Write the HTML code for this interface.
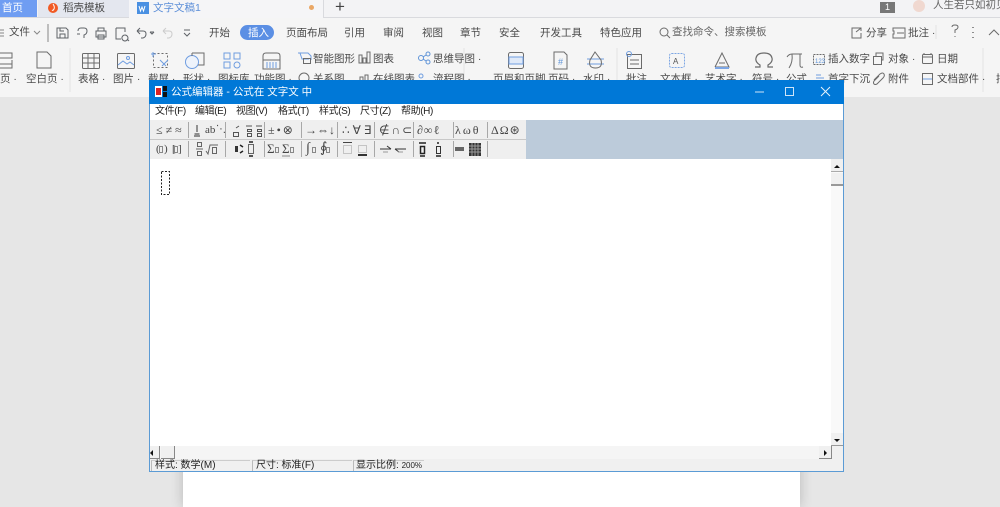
<!DOCTYPE html>
<html><head><meta charset="utf-8"><style>
html,body{margin:0;padding:0;background:#e6e6e6}
body{width:1000px;height:507px;overflow:hidden;position:relative;background:#e6e6e6;font-family:"Liberation Sans","Noto Sans CJK SC",sans-serif;color:#444;filter:blur(.3px)}
.a{position:absolute}
.t{position:absolute;white-space:nowrap;font-size:10.5px;line-height:14px;color:#4a4a4a;transform:translateY(-7px)}
.m{color:#222;font-size:10px;letter-spacing:-.4px}
.s{position:absolute;top:0;left:0;overflow:visible}
.g{position:absolute;white-space:nowrap;font-family:"Liberation Serif","DejaVu Sans",serif;font-size:12px;line-height:14px;color:#444;transform:translateY(-7px)}
.sep{position:absolute;width:1px;background:#a8a8a8}
</style></head><body>
<div class="a" style="left:0;top:0;width:1000px;height:17px;background:#f3f3f5"></div>
<div class="a" style="left:0;top:17px;width:1000px;height:1px;background:#d9dade"></div>
<div class="a" style="left:0;top:18px;width:1000px;height:79px;background:#f5f5f5"></div>
<div class="a" style="left:0;top:0;width:37px;height:17px;background:#6f9df2"></div>
<div class="a" style="left:38px;top:0;width:91px;height:17px;background:#e4e7ef"></div>
<div class="a" style="left:129px;top:0;width:194px;height:18px;background:#f5f5f7;border-right:1px solid #d9dade"></div>
<div class="t" style="left:2px;top:8px;color:#fff">首页</div>
<div class="t" style="left:63px;top:8px">稻壳模板</div>
<div class="t" style="left:153px;top:8px;color:#5d8fd8">文字文稿1</div>
<div class="t" style="left:335px;top:7px;font-size:17px;color:#444">+</div>
<div class="a" style="left:309px;top:5px;width:5px;height:5px;border-radius:50%;background:#eaa765"></div>
<div class="a" style="left:880px;top:2px;width:15px;height:11px;background:#777;color:#fff;font-size:9px;line-height:11px;text-align:center">1</div>
<div class="a" style="left:913px;top:0;width:12px;height:12px;border-radius:50%;background:#f0d8d0"></div>
<div class="t" style="left:933px;top:5px;color:#666">人生若只如初见</div>

<svg class="s" width="1000" height="507" fill="none" stroke="#5f6368" stroke-width="1">
<circle cx="53" cy="8" r="5" fill="#f15a24" stroke="none"/>
<path d="M53 4q2 3 1 5-1 2-2 1" stroke="#fff"/>
<rect x="137" y="2" width="12" height="12" fill="#4a90e2" stroke="none"/>
<path d="M139 6l1.500 5 1.500-4 1.500 4 1.500-5" stroke="#fff"/>
<path d="M0 30h4M0 33h4M0 36h4M34 31l3 3 3-3M48 24v18" stroke="#888"/>
<path d="M57 28h9l2 2v8h-11zM60 38v-4h5v4M60 28v3h4"/>
<path d="M78 31q0-3 3-3h3q3 0 3 3 0 3-3 4v3M77 34h3"/>
<path d="M96 31h10v6h-10zM98 31v-3h6v3M98 35h6v4h-6z"/>
<path d="M116 28h9v4M116 28v11h5M125 35a3 3 0 1 1-.1 0M127 39l2 2" />
<path d="M137 31l3-3M137 31l3 3M137 31h6q3 0 3 3t-3 4h-2"/>
<path d="M150 32h4M150 32l2 2 2-2" />
<path d="M163 31l3-3M163 31l3 3M163 31h6q3 0 3 3t-3 4h-2" stroke="#ccc"/>
<path d="M184 30h6M184 33l3 3 3-3"/>
<rect x="240" y="25" width="34" height="15" rx="7.500" fill="#5b8fe4" stroke="none"/>
<g stroke="#6b6b6b">
<path d="M-8 53h20v5h-20M12 60v8h-20M-8 64h20"/>
<path d="M37 52h10l4 4v12h-14z"/>
<rect x="82.500" y="53.500" width="17" height="15" rx="1"/><path d="M83 58h16M83 63h16M88 54v14M94 54v14"/>
<rect x="117.500" y="53.500" width="17" height="15" rx="1"/><path d="M118 65l5-4 4 3 3-2 4 3" stroke="#6f9de0"/><circle cx="128" cy="58" r="1.500" stroke="#6f9de0"/>
<rect x="153.500" y="53.500" width="14" height="14" stroke-dasharray="2 2"/><path d="M151 54h5M153 52v5M160 60l6 6M168 60l-6 6" stroke="#6f9de0"/>
<circle cx="192" cy="62" r="6.500" stroke="#6f9de0" fill="#eef3fb"/><path d="M192 53h12v12h-6M192 53v3"/>
<g stroke="#6f9de0"><path d="M224 53h6v6h-6zM234 53h6v6h-6zM224 62h6v6h-6z"/><circle cx="237" cy="65" r="3"/></g>
<path d="M263 60v-4q0-3 3-3h11q3 0 3 3v4M263 60h17v9h-17z"/><path d="M267 62v6M270 62v6M273 62v6M276 62v6" stroke="#6f9de0"/>
<path d="M298 53h10l3 3v4M300 53l2 6h7" stroke="#6f9de0"/><rect x="303.500" y="58.500" width="7" height="5"/>
<circle cx="304" cy="78" r="5" />
<path d="M359 55v8h3v-8zM363 58v5h3v-5zM367 52v11h3v-11z"/>
<g stroke="#5f94d8"><circle cx="421" cy="58" r="2.500"/><circle cx="428" cy="54" r="2"/><circle cx="428" cy="62" r="2"/><path d="M423 57l3-2M423 59l3 2"/></g>
<rect x="508.500" y="52.500" width="15" height="16" rx="2"/><rect x="509" y="57" width="14" height="7" fill="#dfe9f8" stroke="#6f9de0"/>
<path d="M554 52h10l3 3v14h-13z"/><text x="558" y="65" font-size="9" font-family="Liberation Sans" fill="#5f94d8" stroke="none">#</text>
<path d="M587 59h17M587 64h17" stroke="#6f9de0"/><path d="M595 52l-5 8q-2 8 5.500 8 7.500 0 5.500-8z"/>
<rect x="627.500" y="54.500" width="14" height="14"/><path d="M630 60h9M630 64h9"/><circle cx="629" cy="54" r="2.500" stroke="#6f9de0"/>
<rect x="669.500" y="53.500" width="15" height="14" rx="2" stroke="#7da6e4" stroke-dasharray="2 1"/>
<text x="673" y="64" font-size="8" font-family="Liberation Sans" fill="#555" stroke="none">A</text>
<path d="M715 67l7-14 7 14h-14M719 63h6" /><path d="M715 68h14" stroke="#7da6e4" stroke-width="2"/>
<path d="M755 67h5v-2q-5-3-4-7 1-5 8-5t8 5q1 4-4 7v2h5" stroke-width="1.200"/>
<path d="M787 57q2-3 5-3h10M792 54q1 8-3 14M800 54v11q0 3 3 2"/>
<rect x="813.500" y="54.500" width="11" height="10" stroke-dasharray="2 1"/><text x="815" y="63" font-size="6" font-family="Liberation Sans" fill="#5f94d8" stroke="none">123</text>
<rect x="873.500" y="56.500" width="8" height="8"/><path d="M876 56v-3h7v7h-2"/>
<rect x="922.500" y="54.500" width="10" height="9" rx="1"/><path d="M923 57h9M924 53v2M931 53v2"/>
<path d="M874 80l6-6q3-2 4 0t-1 4l-6 6q-2 1-3 0t0-3l5-5"/>
<rect x="922.500" y="73.500" width="10" height="11"/><path d="M923 79h9" stroke="#6f9de0"/>
<path d="M816 75h5M816 78h8" stroke="#6f9de0"/>
<path d="M360 80v-3h3v3M365 80v-5h3v5"/>
<circle cx="421" cy="76" r="2" stroke="#6f9de0"/>
<circle cx="664" cy="32" r="4"/><path d="M667 35l3 3"/>
<path d="M858 28h-6v10h9v-5M856 32l5-4M858 28h3v3"/>
<path d="M896 28h-3v3h1v3h-1v4h12v-10zM897 33h7"/>
<path d="M952 27q0-2 3-2t3 2q0 2-3 3v3M955 36v1"/>
<path d="M973 27v1M973 32v1M973 37v1" stroke-width="1.500"/>
<path d="M989 35l5-5 5 5"/>
</g>
<path d="M70 48v44M464 48v44M617 48v44M983 48v44M936 25v14" stroke="#e2e2e2"/>
</svg>

<div class="t" style="left:9px;top:32px">文件</div>
<div class="t" style="left:209px;top:33px">开始</div>
<div class="t" style="left:248px;top:33px;color:#fff">插入</div>
<div class="t" style="left:286px;top:33px">页面布局</div>
<div class="t" style="left:344px;top:33px">引用</div>
<div class="t" style="left:383px;top:33px">审阅</div>
<div class="t" style="left:422px;top:33px">视图</div>
<div class="t" style="left:460px;top:33px">章节</div>
<div class="t" style="left:499px;top:33px">安全</div>
<div class="t" style="left:540px;top:33px">开发工具</div>
<div class="t" style="left:600px;top:33px">特色应用</div>
<div class="t" style="left:672px;top:32px;color:#666">查找命令、搜索模板</div>
<div class="t" style="left:866px;top:33px">分享</div>
<div class="t" style="left:908px;top:33px">批注 ·</div>

<div class="t" style="left:0;top:79px">页 ·</div>
<div class="t" style="left:26px;top:79px">空白页 ·</div>
<div class="t" style="left:78px;top:79px">表格 ·</div>
<div class="t" style="left:113px;top:79px">图片 ·</div>
<div class="t" style="left:148px;top:79px">截屏 ·</div>
<div class="t" style="left:183px;top:79px">形状 ·</div>
<div class="t" style="left:218px;top:79px">图标库</div>
<div class="t" style="left:254px;top:79px">功能图 ·</div>
<div class="t" style="left:313px;top:59px">智能图形</div>
<div class="t" style="left:313px;top:79px">关系图</div>
<div class="t" style="left:373px;top:59px">图表</div>
<div class="t" style="left:373px;top:79px">在线图表</div>
<div class="t" style="left:433px;top:59px">思维导图 ·</div>
<div class="t" style="left:433px;top:79px">流程图 ·</div>
<div class="t" style="left:493px;top:79px">页眉和页脚</div>
<div class="t" style="left:548px;top:79px">页码 ·</div>
<div class="t" style="left:583px;top:79px">水印 ·</div>
<div class="t" style="left:626px;top:79px">批注</div>
<div class="t" style="left:660px;top:79px">文本框 ·</div>
<div class="t" style="left:705px;top:79px">艺术字 ·</div>
<div class="t" style="left:752px;top:79px">符号 ·</div>
<div class="t" style="left:786px;top:79px">公式</div>
<div class="t" style="left:828px;top:59px">插入数字</div>
<div class="t" style="left:828px;top:79px">首字下沉</div>
<div class="t" style="left:888px;top:59px">对象 ·</div>
<div class="t" style="left:888px;top:79px">附件</div>
<div class="t" style="left:937px;top:59px">日期</div>
<div class="t" style="left:937px;top:79px">文档部件 ·</div>
<div class="t" style="left:996px;top:79px">插</div>

<!-- page -->
<div class="a" style="left:183px;top:97px;width:617px;height:410px;background:#fff;box-shadow:0 0 12px rgba(0,0,0,.2)"></div>

<!-- window -->
<div class="a" style="left:149px;top:80px;width:695px;height:392px;background:#f0f0f0;box-sizing:border-box;border:1px solid #5b9bd5;border-top:0"></div>
<div class="a" style="left:149px;top:80px;width:695px;height:24px;background:#0078d7"></div>
<svg class="s" width="1000" height="507" fill="none" style="z-index:2">
<rect x="155" y="86" width="7" height="11" fill="#fff"/><rect x="156" y="88" width="5" height="7" fill="#d22"/>
<rect x="163" y="86" width="4" height="5" fill="#111"/><rect x="163" y="92" width="4" height="5" fill="#111"/>
<path d="M755 92h9" stroke="#cfe4f7"/>
<rect x="785.500" y="87.500" width="8" height="8" stroke="#cfe4f7"/>
<path d="M821 87l9 9M830 87l-9 9" stroke="#e6f2fb"/>
</svg>
<div class="t" style="left:171px;top:92px;color:#fff;z-index:2">公式编辑器 - 公式在 文字文 中</div>

<div class="a" style="left:150px;top:104px;width:693px;height:16px;background:#fff"></div>
<div class="t m" style="left:155px;top:112px">文件(F)</div>
<div class="t m" style="left:195px;top:112px">编辑(E)</div>
<div class="t m" style="left:236px;top:112px">视图(V)</div>
<div class="t m" style="left:278px;top:112px">格式(T)</div>
<div class="t m" style="left:319px;top:112px">样式(S)</div>
<div class="t m" style="left:360px;top:112px">尺寸(Z)</div>
<div class="t m" style="left:401px;top:112px">帮助(H)</div>

<div class="a" style="left:150px;top:120px;width:693px;height:39px;background:#bccbda"></div>
<div class="a" style="left:150px;top:120px;width:376px;height:39px;background:#efefef"></div>
<div class="a" style="left:150px;top:139px;width:376px;height:1px;background:#c8c8c8"></div>

<div class="sep" style="left:188px;top:122px;height:16px"></div><div class="sep" style="left:225px;top:122px;height:16px"></div><div class="sep" style="left:264px;top:122px;height:16px"></div><div class="sep" style="left:301px;top:122px;height:16px"></div><div class="sep" style="left:337px;top:122px;height:16px"></div><div class="sep" style="left:374px;top:122px;height:16px"></div><div class="sep" style="left:413px;top:122px;height:16px"></div><div class="sep" style="left:453px;top:122px;height:16px"></div><div class="sep" style="left:487px;top:122px;height:16px"></div>
<div class="sep" style="left:188px;top:141px;height:16px"></div><div class="sep" style="left:225px;top:141px;height:16px"></div><div class="sep" style="left:264px;top:141px;height:16px"></div><div class="sep" style="left:301px;top:141px;height:16px"></div><div class="sep" style="left:337px;top:141px;height:16px"></div><div class="sep" style="left:374px;top:141px;height:16px"></div><div class="sep" style="left:413px;top:141px;height:16px"></div><div class="sep" style="left:453px;top:141px;height:16px"></div><div class="sep" style="left:487px;top:141px;height:16px"></div>

<div class="g" style="left:156px;top:130px;letter-spacing:3px">≤≠≈</div>
<div class="g" style="left:205px;top:130px;font-size:11px">ab</div>
<div class="g" style="left:216px;top:130px;font-size:10px">⋱</div>
<div class="g" style="left:268px;top:130px;letter-spacing:2px">±•⊗</div>
<div class="g" style="left:305px;top:130px;letter-spacing:0">→⇔↓</div>
<div class="g" style="left:342px;top:130px;letter-spacing:3px">∴∀∃</div>
<div class="g" style="left:379px;top:130px;letter-spacing:2px">∉∩⊂</div>
<div class="g" style="left:417px;top:130px;letter-spacing:1px">∂∞ℓ</div>
<div class="g" style="left:455px;top:130px;letter-spacing:2px">λωθ</div>
<div class="g" style="left:491px;top:130px;letter-spacing:1px">ΔΩ⊛</div>
<div class="g" style="left:267px;top:149px;font-size:13px">Σ</div>
<div class="g" style="left:282px;top:149px;font-size:13px">Σ</div>
<div class="g" style="left:306px;top:149px;font-size:14px">∫</div>
<div class="g" style="left:320px;top:149px;font-size:14px">∮</div>
<div class="g" style="left:156px;top:149px;font-size:11px">(</div>
<div class="g" style="left:164px;top:149px;font-size:11px">)</div>
<div class="g" style="left:172px;top:149px;font-size:11px">[</div>
<div class="g" style="left:178px;top:149px;font-size:11px">]</div>

<svg class="s" width="1000" height="507" fill="none" stroke="#555" style="z-index:2">
<!-- row 1 shapes -->
<path d="M197 125v7M194.500 134h5M194 136h6" stroke-width="1.200"/>
<path d="M233.500 132.500h5v4h-5zM236 128l3-2M247.500 129.500h4v2h-4zM247.500 133.500h4v3h-4zM246 126h6M257.500 129.500h4v2h-4zM257.500 133.500h4v3h-4zM256 126h6" />
<!-- row 2 shapes -->
<path d="M159.500 146.500h3v6h-3zM174.500 146.500h3v6h-3z" stroke="#888"/>
<path d="M197.500 142.500h4v4h-4zM197.500 151.500h4v4h-4zM196 149h7" stroke="#666"/>
<path d="M206 151l2 3 2-9h8M212.500 147.500h4v6h-4z" stroke="#666"/>
<rect x="235" y="146" width="3" height="6" fill="#333" stroke="none"/><path d="M240 145l3 2M240 153l3-2" stroke="#222" stroke-width="1.500"/>
<path d="M248.500 144.500h5v9h-5z" stroke="#666"/><path d="M249 142h4M249 156h4" stroke="#222" stroke-width="1.500"/>
<path d="M275.500 147.500h3v5h-3zM290.500 147.500h3v5h-3zM312.500 147.500h3v5h-3zM326.500 147.500h3v5h-3zM282 156h8" stroke="#888"/>
<path d="M343.500 145.500h8v8h-8z" stroke="#999" stroke-dasharray="1 1"/><path d="M343 142.500h9" stroke="#444"/>
<path d="M358.500 145.500h8v7h-8z" stroke="#999" stroke-dasharray="1 1"/><path d="M358 155h9" stroke="#333" stroke-width="2"/>
<path d="M380 149h11M387 146l4 3" stroke="#333"/><path d="M395 149h11M395 149l4 3" stroke="#333"/><path d="M383 152h5M398 152h5" stroke="#999"/>
<path d="M420.500 146.500h4v7h-4z" stroke="#222" stroke-width="1.500"/><path d="M419 143h7M420 156h5" stroke="#222" stroke-width="1.500"/>
<path d="M436.500 146.500h4v7h-4z" stroke="#333"/><path d="M438 142v2M436 156h5" stroke="#222" stroke-width="1.500"/>
<rect x="455" y="147" width="9" height="4" fill="#666" stroke="none"/>
<rect x="469" y="143" width="12" height="13" fill="#333" stroke="none"/>
<path d="M469 146h12M469 149h12M469 152h12M472 143v13M475 143v13M478 143v13" stroke="#999"/>
</svg>

<div class="a" style="left:150px;top:159px;width:681px;height:287px;background:#fff"></div>
<svg class="s" width="1000" height="507" fill="none" style="z-index:3">
<path d="M161.500 171.500h8v23h-8z" stroke="#222" stroke-dasharray="2 1.500"/>
</svg>

<!-- vertical scrollbar -->
<div class="a" style="left:831px;top:159px;width:12px;height:287px;background:#f9f9f9"></div>
<div class="a" style="left:831px;top:159px;width:12px;height:13px;background:#f0f0f0;border-bottom:1px solid #aaa;box-sizing:border-box"></div>
<div class="a" style="left:831px;top:173px;width:12px;height:13px;background:#f0f0f0;border-bottom:2px solid #999;box-sizing:border-box"></div>
<div class="a" style="left:831px;top:433px;width:12px;height:13px;background:#f0f0f0;border-bottom:1px solid #999;box-sizing:border-box"></div>
<svg class="s" width="1000" height="507" style="z-index:3"><path d="M834 168l3-3 3 3z" fill="#111"/><path d="M834 439l3 3 3-3z" fill="#111"/><path d="M153 450l-3 3 3 3z" fill="#111"/><path d="M824 450l3 3-3 3z" fill="#111"/></svg>

<!-- horizontal scrollbar -->
<div class="a" style="left:150px;top:446px;width:681px;height:13px;background:#f5f5f5"></div>
<div class="a" style="left:150px;top:446px;width:10px;height:13px;background:#f0f0f0;border-right:1px solid #888;border-bottom:1px solid #888;box-sizing:border-box"></div>
<div class="a" style="left:161px;top:446px;width:14px;height:13px;background:#f0f0f0;border-right:1px solid #888;border-bottom:1px solid #888;box-sizing:border-box"></div>
<div class="a" style="left:819px;top:446px;width:13px;height:13px;background:#f0f0f0;border-right:1px solid #888;border-bottom:1px solid #888;box-sizing:border-box"></div>

<!-- status -->
<div class="a" style="left:151px;top:460px;width:99px;height:11px;border-top:1px solid #ccc;border-left:1px solid #bbb;box-sizing:border-box"></div>
<div class="a" style="left:252px;top:460px;width:100px;height:11px;border-top:1px solid #ccc;border-left:1px solid #bbb;box-sizing:border-box"></div>
<div class="a" style="left:353px;top:460px;width:71px;height:11px;border-top:1px solid #ccc;border-left:1px solid #bbb;box-sizing:border-box"></div>
<div class="t" style="left:155px;top:466px;color:#222;font-size:10px">样式: 数学(M)</div>
<div class="t" style="left:256px;top:466px;color:#222;font-size:10px">尺寸: 标准(F)</div>
<div class="t" style="left:356px;top:466px;color:#222;font-size:10px">显示比例: <span style="font-size:8px">200%</span></div>
</body></html>
